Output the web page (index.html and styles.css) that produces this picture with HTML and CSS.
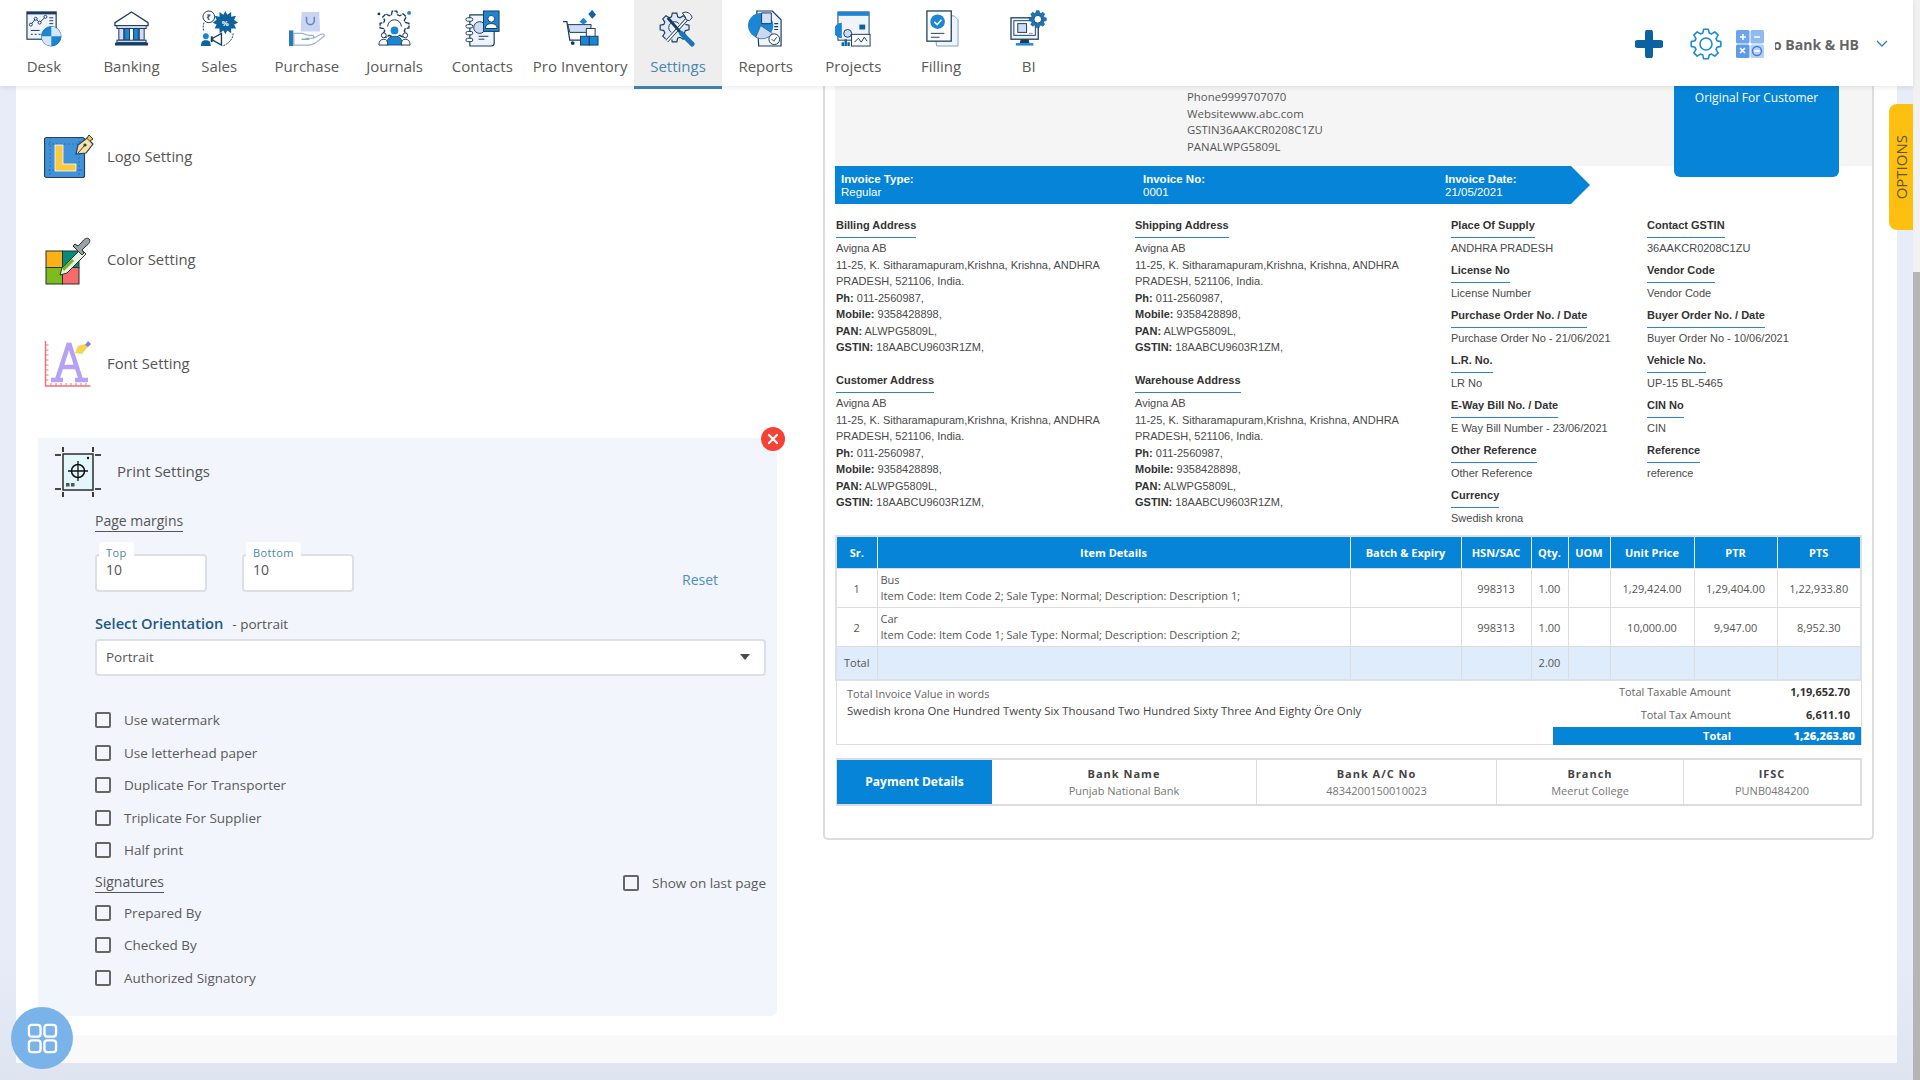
FILE: index.html
```html
<!DOCTYPE html>
<html lang="en">
<head>
<meta charset="utf-8">
<title>Invoice Settings</title>
<link rel="stylesheet" href="styles.css">
</head>
<body>
<svg class="defs" aria-hidden="true"><symbol id="gear" viewBox="0 0 32 32"><polygon points="27.05,12.83 30.82,13.65 30.82,18.35 27.05,19.17 26.06,21.58 28.14,24.82 24.82,28.14 21.58,26.06 19.17,27.05 18.35,30.82 13.65,30.82 12.83,27.05 10.42,26.06 7.18,28.14 3.86,24.82 5.94,21.58 4.95,19.17 1.18,18.35 1.18,13.65 4.95,12.83 5.94,10.42 3.86,7.18 7.18,3.86 10.42,5.94 12.83,4.95 13.65,1.18 18.35,1.18 19.17,4.95 21.58,5.94 24.82,3.86 28.14,7.18 26.06,10.42"/></symbol></svg>
<div class="page">
  <div class="window">
    <header class="topbar">
      <nav class="menu">
        <a class="menu-item">
          <svg class="menu-icon" viewBox="0 0 38 38"><rect x="2" y="2" width="30" height="28" fill="#eef3fc" stroke="#1a3c5e" stroke-width="1.2"/><rect x="2" y="2" width="30" height="2.5" fill="#1a3c5e"/><polyline points="6,15 11,9 15,13 21,7" fill="none" stroke="#1a3c5e" stroke-width="1"/><circle cx="6" cy="15" r="1.5" fill="#fff" stroke="#1a3c5e"/><circle cx="11" cy="9" r="1.5" fill="#fff" stroke="#1a3c5e"/><circle cx="15" cy="13" r="1.5" fill="#fff" stroke="#1a3c5e"/><circle cx="21" cy="7" r="1.5" fill="#fff" stroke="#1a3c5e"/><path d="M25 8h4M25 11h4M25 14h4M6 21h9M6 25h2M10 25h2M14 25h2" stroke="#1a3c5e" stroke-width="1"/><circle cx="27" cy="27" r="10" fill="#1a86d4" stroke="#1a6fa8"/><path d="M27 17a10 10 0 0 1 10 10H27zM27 27H17a10 10 0 0 0 10 10z" fill="#d5e6f8"/></svg>
          <span>Desk</span>
        </a>
        <a class="menu-item">
          <svg class="menu-icon" viewBox="0 0 38 38"><path d="M19 2 2 13v3h34v-3z" fill="#fff" stroke="#1a3c5e" stroke-width="1.3"/><rect x="4" y="16" width="30" height="3" fill="#cfdcf5" stroke="#1a3c5e"/><rect x="6" y="19" width="5" height="12" fill="#cfdcf5" stroke="#1a3c5e"/><rect x="12" y="19" width="5" height="12" fill="#1a86d4" stroke="#1a3c5e"/><rect x="21" y="19" width="5" height="12" fill="#1a86d4" stroke="#1a3c5e"/><rect x="27" y="19" width="5" height="12" fill="#cfdcf5" stroke="#1a3c5e"/><rect x="4" y="31" width="30" height="2.5" fill="#cfdcf5" stroke="#1a3c5e"/><rect x="2" y="33.5" width="34" height="3" fill="#1a3c5e"/></svg>
          <span>Banking</span>
        </a>
        <a class="menu-item">
          <svg class="menu-icon" viewBox="0 0 38 38"><circle cx="8" cy="7" r="6" fill="#fff" stroke="#1a3c5e"/><text x="8" y="10" class="glyph" fill="#1a3c5e">₹</text><polygon points="25,1 27,5 31,2 31,7 36,6 34,10 38,13 34,15 36,19 31,19 31,24 27,21 25,25 23,21 19,24 19,19 14,19 16,15 12,13 16,10 14,6 19,7 19,2 23,5" fill="#10629e"/><text x="25" y="16" class="glyph" fill="#fff">%</text><circle cx="5" cy="27" r="3" fill="#1a86d4"/><path d="M0 37c0-5 2-6 5-6s5 1 5 6z" fill="#10629e"/><path d="M12 29l9-5v12l-9-5z" fill="#fff" stroke="#1a3c5e" stroke-width="1.4"/><path d="M12 27h-2v6h2z" fill="#1a3c5e"/><path d="M33 24c0 6-5 11-11 13M3 13c-1 3-1 7 0 9" fill="none" stroke="#1a3c5e" stroke-dasharray="2 1"/></svg>
          <span>Sales</span>
        </a>
        <a class="menu-item">
          <svg class="menu-icon" viewBox="0 0 38 38"><path d="M14 2h18l1 20H13z" fill="#c9d5f3"/><path d="M19 7v4a4 4 0 0 0 8 0V7" fill="none" stroke="#6a85c0" stroke-width="1.6"/><rect x="1" y="21" width="4.500" height="16" fill="#2a78b8"/><path d="M6 24h8c3 0 4 2 8 2h3c2 0 2 3 0 3h-7l8 0 8-4c2-1 4 0 3 2l-9 7c-2 1-4 2-7 2H6z" fill="#fff" stroke="#9ab0cf" stroke-width="1.200"/><path d="M14 30h8" stroke="#4a86b8"/></svg>
          <span>Purchase</span>
        </a>
        <a class="menu-item">
          <svg class="menu-icon" viewBox="0 0 38 38"><use href="#gear" x="3" y="0" width="32" height="32" fill="#fff" stroke="#1a3c5e" stroke-width="1.400" stroke-dasharray="5 1"/><path d="M12 17a7 7 0 0 1 14 0" fill="none" stroke="#1a3c5e"/><circle cx="19" cy="21" r="4" fill="#1a86d4"/><path d="M11 36c0-7 3-9 8-9s8 2 8 9z" fill="#1a86d4" stroke="#1a3c5e" stroke-width=".8"/><circle cx="8" cy="26" r="2.500" fill="#fff" stroke="#1a3c5e"/><path d="M3 36c0-4 2-6 5-6s4 2 4 6z" fill="#fff" stroke="#1a3c5e"/><circle cx="30" cy="26" r="2.500" fill="#fff" stroke="#1a3c5e"/><path d="M26 36c0-4 1-6 4-6s5 2 5 6z" fill="#fff" stroke="#1a3c5e"/><circle cx="34" cy="3" r="2" fill="#1a86d4"/><circle cx="3" cy="4" r="1.500" fill="#1a3c5e"/></svg>
          <span>Journals</span>
        </a>
        <a class="menu-item">
          <svg class="menu-icon" viewBox="0 0 38 38"><path d="M6 5h22c2 0 3 1 3 3v26c0 2-1 3-3 3H6z" fill="#eef3fc" stroke="#1a3c5e" stroke-width="1.200"/><g fill="#fff" stroke="#1a3c5e"><rect x="2" y="8" width="7" height="3.500" rx="1.700"/><rect x="2" y="15" width="7" height="3.500" rx="1.700"/><rect x="2" y="22" width="7" height="3.500" rx="1.700"/><rect x="2" y="29" width="7" height="3.500" rx="1.700"/></g><circle cx="16" cy="18" r="6" fill="#cfdcf5" stroke="#1a3c5e"/><rect x="20" y="1" width="16" height="21" fill="#1a86d4" stroke="#1a3c5e"/><circle cx="28" cy="9" r="3.500" fill="#fff" stroke="#1a3c5e"/><path d="M22 19c0-4 3-5 6-5s6 1 6 5z" fill="#fff" stroke="#1a3c5e"/><path d="M15 27h10M15 30h6" stroke="#1a3c5e"/></svg>
          <span>Contacts</span>
        </a>
        <a class="menu-item menu-wide">
          <svg class="menu-icon" viewBox="0 0 38 38"><path d="M1 12h4l3 19h16" fill="none" stroke="#1a3c5e" stroke-width="1.300"/><path d="M6 15h24l-1 8H8z" fill="#cfdcf5" stroke="#1a3c5e"/><polygon points="18,12 22,8 26,12 22,15" fill="#1a86d4"/><polygon points="27,4 31,0 35,5 31,9" fill="#10629e"/><circle cx="11" cy="34" r="2" fill="#1a3c5e"/><circle cx="22" cy="34" r="2" fill="#1a3c5e"/><rect x="25" y="19" width="9" height="9" fill="#fff" stroke="#1a3c5e"/><rect x="19" y="27" width="9" height="9" fill="#1a86d4" stroke="#1a3c5e"/><rect x="28" y="27" width="9" height="9" fill="#1a86d4" stroke="#1a3c5e"/></svg>
          <span>Pro Inventory</span>
        </a>
        <a class="menu-item menu-active">
          <svg class="menu-icon" viewBox="0 0 38 38"><use href="#gear" x="0" y="2" width="32" height="32" fill="#dfe8f6" stroke="#1a3c5e" stroke-width="1.200"/><circle cx="16" cy="18" r="6" fill="#f0f0f0" stroke="#1a3c5e"/><path d="M8 32 29 9" stroke="#fff" stroke-width="5"/><path d="M8 32 29 9" stroke="#1a3c5e" stroke-width="3.500"/><path d="M8 32 29 9" stroke="#fff" stroke-width="1.800"/><path d="M24 3c4-2 9 0 10 5l-3 3-3-1-1-3z" fill="#f0f0f0" stroke="#1a3c5e"/><path d="M9 8 22 23" stroke="#1a3c5e" stroke-width="3"/><path d="M23 24 34 35" stroke="#1a76b8" stroke-width="5" stroke-linecap="round"/></svg>
          <span>Settings</span>
        </a>
        <a class="menu-item">
          <svg class="menu-icon" viewBox="0 0 38 38"><path d="M10 1h16l9 9v27H12z" fill="#eef3fc" stroke="#1a3c5e" stroke-width="1.200"/><circle cx="14" cy="16" r="13" fill="#1a86d4"/><path d="M14 16 26 24a13 13 0 0 1-17 4z" fill="#c9d8f5" stroke="#1a3c5e" stroke-width=".6"/><path d="M15 3h10v11H15z" fill="#d5dff4" stroke="#1a3c5e"/><path d="M28 14h4M28 17h4M28 20h4" stroke="#1a3c5e" stroke-width="1.200"/><circle cx="28" cy="30" r="5.500" fill="#fff" stroke="#1a3c5e"/><path d="M25.500 30l2 2 3-4" fill="none" stroke="#1a3c5e"/></svg>
          <span>Reports</span>
        </a>
        <a class="menu-item">
          <svg class="menu-icon" viewBox="0 0 38 38"><rect x="3" y="2" width="32" height="29" fill="#eef3fc" stroke="#1a3c5e"/><rect x="3" y="2" width="32" height="4" fill="#1a86d4"/><path d="M7 13a8 8 0 0 0 0 16z" fill="#1a86d4"/><circle cx="13" cy="24" r="4" fill="#cfdcf5" stroke="#1a3c5e"/><rect x="25" y="15" width="6" height="5" fill="#10629e"/><path d="M8 37V33M11 37V30M14 37V33" stroke="#10629e" stroke-width="2.500"/><rect x="17" y="25" width="19" height="12" fill="#fff" stroke="#1a3c5e"/><polyline points="20,33 24,29 27,33 30,28 33,32" fill="none" stroke="#1a3c5e"/></svg>
          <span>Projects</span>
        </a>
        <a class="menu-item">
          <svg class="menu-icon" viewBox="0 0 38 38"><path d="M10 6h22l4 4v27H14z" fill="#eef3fc" stroke="#8a9fbc"/><rect x="4" y="1" width="25" height="31" fill="#fff" stroke="#1a3c5e" stroke-width="1.300"/><circle cx="15" cy="12" r="7.500" fill="#1a86d4"/><path d="M11.500 12l3 3 4.500-5" fill="none" stroke="#fff" stroke-width="1.500"/><path d="M8 24h14M8 28h9" stroke="#1a3c5e"/></svg>
          <span>Filling</span>
        </a>
        <a class="menu-item">
          <svg class="menu-icon" viewBox="0 0 38 38"><rect x="1" y="8" width="28" height="22" fill="#eef3fc" stroke="#1a3c5e" stroke-width="1.300"/><rect x="4" y="11" width="22" height="15" fill="#fff" stroke="#1a3c5e"/><rect x="8" y="14" width="9" height="9" fill="#cfdcf5" stroke="#1a3c5e"/><path d="M11 30h8l1 4H10z" fill="#1a3c5e"/><rect x="6" y="34" width="18" height="2.500" fill="#1a86d4"/><path d="M20 24h4" stroke="#1a3c5e" stroke-dasharray="1 1"/><use href="#gear" x="19" y="0" width="19" height="19" fill="#1a76b8" stroke="#10507e"/><circle cx="28.500" cy="9.500" r="4" fill="#fff" stroke="#1a3c5e"/></svg>
          <span>BI</span>
        </a>
      </nav>
      <div class="actions">
        <svg class="act-plus" viewBox="0 0 28 28"><path d="M14 3v22M3 14h22" stroke="#0b62a0" stroke-width="8" stroke-linecap="round"/></svg>
        <svg class="act-gear" viewBox="0 0 32 32"><use href="#gear" fill="none" stroke="#1b8ad6" stroke-width="1.600" stroke-linejoin="round"/><circle cx="16" cy="16" r="6" fill="none" stroke="#1b8ad6" stroke-width="1.600"/></svg>
        <svg class="act-calc" viewBox="0 0 28 28"><rect x="0" y="0" width="13.500" height="13.500" rx="1.500" fill="#6aa5ee"/><rect x="14.500" y="0" width="13.500" height="13.500" rx="1.500" fill="#8fbbf0"/><rect x="0" y="14.500" width="13.500" height="13.500" rx="1.500" fill="#5f9be6"/><rect x="14.500" y="14.500" width="13.500" height="13.500" rx="1.500" fill="#b4d0f5"/><path d="M4 7h6M7 4v6M18 7h6M4 18l5 5M9 18l-5 5M18 21h6" stroke="#fff" stroke-width="1.600"/><circle cx="21" cy="21" r="4.500" fill="none" stroke="#3f7fd6" stroke-width="1.400"/></svg>
        <div class="company-clip"><span>Demo Bank &amp; HB</span></div>
        <svg class="act-chevron" viewBox="0 0 12 8"><path d="M1 1l5 5 5-5" fill="none" stroke="#2f7fbd" stroke-width="1.300"/></svg>
      </div>
    </header>

    <main class="sheet">
      <section class="left">
        <div class="setting-rows">
          <div class="setting-row">
            <svg class="setting-icon" viewBox="0 0 50 50"><rect x="0.500" y="5.500" width="40" height="40" rx="2" fill="#4192d9" stroke="#24415e" stroke-width="1.200"/><path d="M0 12h41M0 38h41M6 5v40M35 5v40" stroke="#1f5f99" stroke-dasharray="2 2" stroke-width=".7"/><path d="M11 13h8v19h13v7H11z" fill="#fbc93d" stroke="#fff" stroke-width=".8"/><path d="M32 22l2-9 9-7 6 6-7 9z" fill="#fbe2a0" stroke="#24415e" stroke-width="1.200"/><path d="M34 21l7-8" stroke="#24415e"/><circle cx="41" cy="13" r="1.600" fill="#24415e"/><path d="M43 6l2-3 4 4-3 2" fill="#f3c24c" stroke="#24415e"/></svg>
            <span>Logo Setting</span>
          </div>
          <div class="setting-row">
            <svg class="setting-icon" viewBox="0 0 50 50"><rect x="2" y="16" width="16.500" height="16.500" fill="#fbb117" stroke="#23352e"/><rect x="18.500" y="16" width="16.500" height="16.500" fill="#0a8a78" stroke="#23352e"/><rect x="2" y="32.500" width="16.500" height="16.500" fill="#7cbc1e" stroke="#23352e"/><rect x="18.500" y="32.500" width="16.500" height="16.500" fill="#f96a6a" stroke="#23352e"/><path d="M18 33l19-19 5 5-19 19-7 2z" fill="#e9f3e2" stroke="#23352e"/><path d="M18 33l10-9 2 2-10 10z" fill="#6fb52a"/><path d="M34 11l4-4c2-3 5-5 7-3s0 5-3 7l-4 4 2 3-2 2-9-9 2-2z" fill="#9aa0a6" stroke="#23352e"/></svg>
            <span>Color Setting</span>
          </div>
          <div class="setting-row">
            <svg class="setting-icon" viewBox="0 0 50 50"><path d="M1.500 2v45h45" fill="none" stroke="#f0707a" stroke-width="1.400"/><path d="M1.500 6h3M1.500 11h3M1.500 16h3M1.500 21h3M1.500 26h3M1.500 31h3M1.500 36h3M1.500 41h3M7 47v-3M12 47v-3M17 47v-3M22 47v-3M27 47v-3M32 47v-3M37 47v-3M42 47v-3" stroke="#f0707a"/><path d="M25 4 13 41M25 4 37 41M18 28h14M7 41h12M31 41h13" fill="none" stroke="#b6a2f5" stroke-width="4.500"/><path d="M31 14l3-7 7-2 3 3-2 2-4 5z" fill="#fcd34d"/><path d="M41 6l3-4 3 3-3 3z" fill="#7b83d8"/></svg>
            <span>Font Setting</span>
          </div>
        </div>

        <div class="print-panel">
          <button class="close-btn" aria-label="Close"><svg viewBox="0 0 24 24"><path d="M8 8l8 8M16 8l-8 8" stroke="#fff" stroke-width="2.200" stroke-linecap="round"/></svg></button>
          <div class="print-head">
            <svg class="print-icon" viewBox="0 0 46 50"><rect x="8" y="7" width="30" height="36" fill="#e3f6fb" stroke="#2b2b2b" stroke-width="1.500"/><path d="M0 8h6M40 8h6M0 42h6M40 42h6M8 0v5M38 0v5M8 45v5M38 45v5" stroke="#111" stroke-width="1.600"/><circle cx="23" cy="24" r="6.500" fill="none" stroke="#111" stroke-width="1.500"/><path d="M23 14v20M13 24h20" stroke="#111" stroke-width="1.300"/><rect x="11" y="36" width="3.500" height="3.500" fill="#555"/><rect x="16" y="36" width="3.500" height="3.500" fill="#555"/><circle cx="33" cy="11" r="1.200" fill="#111"/></svg>
            <span>Print Settings</span>
          </div>
          <div class="print-body">
            <div><span class="sub-title">Page margins</span></div>
            <div class="margin-row">
              <label class="field"><span class="field-label">Top</span><input class="field-input" value="10"></label>
              <label class="field"><span class="field-label">Bottom</span><input class="field-input" value="10"></label>
              <a class="reset">Reset</a>
            </div>
            <div class="orient-row"><span class="orient-title">Select Orientation</span><span class="orient-value">- portrait</span></div>
            <div class="select"><span>Portrait</span><i class="select-arrow"></i></div>
            <div class="check-list">
              <label class="check"><input type="checkbox"><span>Use watermark</span></label>
              <label class="check"><input type="checkbox"><span>Use letterhead paper</span></label>
              <label class="check"><input type="checkbox"><span>Duplicate For Transporter</span></label>
              <label class="check"><input type="checkbox"><span>Triplicate For Supplier</span></label>
              <label class="check"><input type="checkbox"><span>Half print</span></label>
            </div>
            <div class="sign-row">
              <span class="sub-title">Signatures</span>
              <label class="check"><input type="checkbox"><span>Show on last page</span></label>
            </div>
            <div class="check-list sign-list">
              <label class="check"><input type="checkbox"><span>Prepared By</span></label>
              <label class="check"><input type="checkbox"><span>Checked By</span></label>
              <label class="check"><input type="checkbox"><span>Authorized Signatory</span></label>
            </div>
          </div>
        </div>
      </section>

      <section class="right">
        <article class="invoice">
          <div class="inv-head">
            <div class="inv-company">
              <p>Phone9999707070</p>
              <p>Websitewww.abc.com</p>
              <p>GSTIN36AAKCR0208C1ZU</p>
              <p>PANALWPG5809L</p>
            </div>
            <div class="inv-copy">Original For Customer</div>
          </div>
          <div class="inv-bar">
            <div><b>Invoice Type:</b><br>Regular</div>
            <div><b>Invoice No:</b><br>0001</div>
            <div><b>Invoice Date:</b><br>21/05/2021</div>
          </div>
          <div class="addr-grid">
            <div class="addr-col">
              <div class="addr-block">
                <h4><span>Billing Address</span></h4>
                <p>Avigna AB<br>11-25, K. Sitharamapuram,Krishna, Krishna, ANDHRA<br>PRADESH, 521106, India.<br><b>Ph:</b> 011-2560987,<br><b>Mobile:</b> 9358428898,<br><b>PAN:</b> ALWPG5809L,<br><b>GSTIN:</b> 18AABCU9603R1ZM,</p>
              </div>
              <div class="addr-block">
                <h4><span>Customer Address</span></h4>
                <p>Avigna AB<br>11-25, K. Sitharamapuram,Krishna, Krishna, ANDHRA<br>PRADESH, 521106, India.<br><b>Ph:</b> 011-2560987,<br><b>Mobile:</b> 9358428898,<br><b>PAN:</b> ALWPG5809L,<br><b>GSTIN:</b> 18AABCU9603R1ZM,</p>
              </div>
            </div>
            <div class="addr-col">
              <div class="addr-block">
                <h4><span>Shipping Address</span></h4>
                <p>Avigna AB<br>11-25, K. Sitharamapuram,Krishna, Krishna, ANDHRA<br>PRADESH, 521106, India.<br><b>Ph:</b> 011-2560987,<br><b>Mobile:</b> 9358428898,<br><b>PAN:</b> ALWPG5809L,<br><b>GSTIN:</b> 18AABCU9603R1ZM,</p>
              </div>
              <div class="addr-block">
                <h4><span>Warehouse Address</span></h4>
                <p>Avigna AB<br>11-25, K. Sitharamapuram,Krishna, Krishna, ANDHRA<br>PRADESH, 521106, India.<br><b>Ph:</b> 011-2560987,<br><b>Mobile:</b> 9358428898,<br><b>PAN:</b> ALWPG5809L,<br><b>GSTIN:</b> 18AABCU9603R1ZM,</p>
              </div>
            </div>
            <div class="addr-col">
              <div class="pair"><h4><span>Place Of Supply</span></h4><p>ANDHRA PRADESH</p></div>
              <div class="pair"><h4><span>License No</span></h4><p>License Number</p></div>
              <div class="pair"><h4><span>Purchase Order No. / Date</span></h4><p>Purchase Order No - 21/06/2021</p></div>
              <div class="pair"><h4><span>L.R. No.</span></h4><p>LR No</p></div>
              <div class="pair"><h4><span>E-Way Bill No. / Date</span></h4><p>E Way Bill Number - 23/06/2021</p></div>
              <div class="pair"><h4><span>Other Reference</span></h4><p>Other Reference</p></div>
              <div class="pair"><h4><span>Currency</span></h4><p>Swedish krona</p></div>
            </div>
            <div class="addr-col">
              <div class="pair"><h4><span>Contact GSTIN</span></h4><p>36AAKCR0208C1ZU</p></div>
              <div class="pair"><h4><span>Vendor Code</span></h4><p>Vendor Code</p></div>
              <div class="pair"><h4><span>Buyer Order No. / Date</span></h4><p>Buyer Order No - 10/06/2021</p></div>
              <div class="pair"><h4><span>Vehicle No.</span></h4><p>UP-15 BL-5465</p></div>
              <div class="pair"><h4><span>CIN No</span></h4><p>CIN</p></div>
              <div class="pair"><h4><span>Reference</span></h4><p>reference</p></div>
            </div>
          </div>

          <table class="items">
            <colgroup><col class="c-sr"><col class="c-item"><col class="c-batch"><col class="c-hsn"><col class="c-qty"><col class="c-uom"><col class="c-unit"><col class="c-ptr"><col class="c-pts"></colgroup>
            <thead>
              <tr><th>Sr.</th><th>Item Details</th><th>Batch &amp; Expiry</th><th>HSN/SAC</th><th>Qty.</th><th>UOM</th><th>Unit Price</th><th>PTR</th><th>PTS</th></tr>
            </thead>
            <tbody>
              <tr class="row-a"><td>1</td><td class="item-cell">Bus<br>Item Code: Item Code 2; Sale Type: Normal; Description: Description 1;</td><td></td><td>998313</td><td>1.00</td><td></td><td>1,29,424.00</td><td>1,29,404.00</td><td>1,22,933.80</td></tr>
              <tr class="row-b"><td>2</td><td class="item-cell">Car<br>Item Code: Item Code 1; Sale Type: Normal; Description: Description 2;</td><td></td><td>998313</td><td>1.00</td><td></td><td>10,000.00</td><td>9,947.00</td><td>8,952.30</td></tr>
              <tr class="row-total"><td>Total</td><td></td><td></td><td></td><td>2.00</td><td></td><td></td><td></td><td></td></tr>
            </tbody>
          </table>

          <div class="summary">
            <div class="words">
              <p>Total Invoice Value in words</p>
              <p class="words-value">Swedish krona One Hundred Twenty Six Thousand Two Hundred Sixty Three And Eighty Öre Only</p>
            </div>
            <div class="totals">
              <div class="t-row"><span>Total Taxable Amount</span><b>1,19,652.70</b></div>
              <div class="t-row"><span>Total Tax Amount</span><b>6,611.10</b></div>
              <div class="t-row t-grand"><span>Total</span><b>1,26,263.80</b></div>
            </div>
          </div>

          <div class="payment">
            <div class="pay-title">Payment Details</div>
            <div class="pay-cell pay-name"><b>Bank Name</b><span>Punjab National Bank</span></div>
            <div class="pay-cell pay-ac"><b>Bank A/C No</b><span>4834200150010023</span></div>
            <div class="pay-cell pay-branch"><b>Branch</b><span>Meerut College</span></div>
            <div class="pay-cell pay-ifsc"><b>IFSC</b><span>PUNB0484200</span></div>
          </div>
        </article>
      </section>
    </main>
    <div class="sheet-foot"></div>
    <div class="options-tab"><span>OPTIONS</span></div>
    <button class="fab" aria-label="Apps"><svg viewBox="0 0 32 32"><g fill="none" stroke="#fff" stroke-width="2.400"><rect x="2" y="2" width="12" height="12" rx="3"/><rect x="18" y="2" width="12" height="12" rx="3"/><rect x="2" y="18" width="12" height="12" rx="3"/><rect x="18" y="18" width="12" height="12" rx="3"/></g></svg></button>
  </div>
  <div class="scrollbar"><div class="scroll-thumb"></div></div>
</div>
</body>
</html>
```
FILE: styles.css
```css
* { box-sizing: border-box; }
html, body { margin: 0; height: 100%; overflow: hidden; }
body { font-family: "Open Sans", sans-serif; color: #555; background: #e6edf8; }
p, h4 { margin: 0; }
.defs { display: none; }
.glyph { font-size: 8px; font-weight: 700; text-anchor: middle; font-family: "Noto Sans", "DejaVu Sans", sans-serif; }

.page { display: flex; width: 1920px; height: 1080px; }
.window { position: relative; width: 1913px; height: 1080px; display: flex; flex-direction: column; background: linear-gradient(#e6edf8 0, #e6edf8 950px, #dfe5f0 1080px); }
.scrollbar { width: 7px; background: #f1f1f1; padding-top: 272px; }
.scroll-thumb { height: 808px; background: #b5b5b5; }

/* top bar */
.topbar { position: relative; z-index: 3; flex: none; height: 86px; display: flex; background: #fff; box-shadow: 0 2px 5px rgba(0,0,0,.08); }
.menu { display: flex; }
.menu-item { width: 87.7px; height: 89px; display: flex; flex-direction: column; align-items: center; padding-top: 10px; font-size: 15px; line-height: 20px; color: #5a5a5a; white-space: nowrap; }
.menu-wide { width: 108px; }
.menu-active { background: #eeeeee; border-bottom: 3px solid #3f7fa8; color: #4a86b0; }
.menu-icon { width: 37px; height: 37px; margin-bottom: 9px; flex: none; }
.actions { margin-left: auto; display: flex; align-items: center; height: 86px; padding: 2px 25px 0 0; }
.act-plus { width: 28px; height: 28px; }
.act-gear { width: 32px; height: 32px; margin-left: 27px; }
.act-calc { width: 28px; height: 28px; margin-left: 14.5px; }
.company-clip { width: 84px; margin-left: 11px; overflow: hidden; display: flex; justify-content: flex-end; font-size: 14px; font-weight: 700; color: #666; white-space: nowrap; flex: none; }
.company-clip span { flex: none; }
.act-chevron { width: 12px; height: 8px; margin-left: 17px; }

/* sheet */
.sheet { flex: none; height: 949px; margin: 0 16px; background: #fff; display: flex; }
.sheet-foot { flex: none; height: 28px; margin: 0 16px; background: #f9f9f9; }
.left { flex: none; width: 806px; padding: 19px 0 0 22px; }
.setting-rows { display: grid; grid-auto-rows: 103.5px; padding-left: 6px; }
.setting-row { display: flex; align-items: center; gap: 13px; font-size: 14.8px; color: #555; }
.setting-row span { padding-bottom: 2px; }
.setting-icon { width: 50px; height: 50px; flex: none; }

.print-panel { position: relative; width: 739px; height: 578px; margin-top: 22.5px; background: #f2f5fb; border-radius: 0 0 6px 6px; padding: 9px 11px 0 0; }
.close-btn { position: absolute; top: -11px; right: -8px; width: 24px; height: 24px; padding: 0; border: 0; border-radius: 50%; background: #f44336; }
.close-btn svg { display: block; width: 24px; height: 24px; }
.print-head { display: flex; align-items: center; gap: 16px; padding-left: 17px; font-size: 15px; color: #555; }
.print-head span { padding-bottom: 2px; }
.print-icon { width: 46px; height: 50px; flex: none; }
.print-body { padding: 14px 0 0 57px; font-size: 14px; }
.sub-title { display: inline-block; line-height: 20px; font-size: 14px; border-bottom: 1px solid #555; color: #555; }
.margin-row { display: flex; align-items: flex-end; height: 60px; gap: 35px; }
.field { position: relative; display: block; width: 112px; height: 38px; }
.field-label { position: absolute; top: -12px; left: 4px; padding: 0 7px; font-size: 11px; line-height: 22px; letter-spacing: .4px; color: #4a86a8; background: #fff; border-radius: 3px 3px 0 0; }
.field-input { width: 112px; height: 38px; padding: 0 9px 7px; border: 2px solid #dcdfe6; border-radius: 4px; background: #fff; font: 14px "Open Sans", sans-serif; color: #555; }
.reset { margin-left: 293px; font-size: 14px; line-height: 20px; padding-bottom: 2px; color: #4a90c2; }
.orient-row { display: flex; align-items: baseline; margin-top: 21px; height: 20px; line-height: 20px; }
.orient-title { font-size: 14.7px; font-weight: 600; color: #1e5a8a; }
.orient-value { margin-left: 9px; font-size: 13.5px; color: #555; }
.select { display: flex; align-items: center; justify-content: space-between; width: 671px; height: 37px; margin-top: 6px; padding: 0 14px 2px 9px; border: 2px solid #dcdfe6; border-radius: 4px; background: #fff; font-size: 13.5px; color: #555; }
.select-arrow { width: 0; height: 0; border: 5px solid transparent; border-top: 6px solid #4a4a4a; border-bottom: 0; }
.check-list { margin-top: 28px; }
.sign-list { margin-top: -2px; }
.check { display: flex; align-items: center; height: 32.5px; gap: 13px; font-size: 13.5px; color: #5a5a5a; }
.check input { appearance: none; width: 16px; height: 16px; margin: 0; border: 2px solid #666; border-radius: 2px; background: transparent; flex: none; }
.sign-row { display: flex; align-items: center; justify-content: space-between; width: 671px; height: 32px; }

/* invoice */
.right { flex: none; width: 1051px; padding-left: 1px; }
.invoice { width: 1051px; height: 754px; border: solid #dddddd; border-width: 0 2px 2px; border-radius: 0 0 5px 5px; padding: 0 11px 0 10px; }
.inv-head { display: flex; height: 80px; margin-right: -11px; background: #f5f5f5; font-size: 11.4px; color: #555; }
.inv-company { width: 839px; padding: 3px 0 0 352px; line-height: 16.500px; }
.inv-copy { flex: none; width: 165px; height: 91px; padding-top: 3px; border-radius: 0 0 6px 6px; background: #0584d8; color: #fff; font-size: 12px; line-height: 18px; text-align: center; }
.inv-bar { display: grid; grid-template-columns: 302px 302px 1fr; width: 755px; height: 38px; padding: 6.500px 0 0 6px; background: #0584d8; clip-path: polygon(0 0, 736px 0, 100% 50%, 736px 100%, 0 100%); color: #fff; font: 11.500px/13px "Liberation Sans", Arial, sans-serif; }
.addr-grid { display: grid; grid-template-columns: 299px 316px 196px 1fr; padding: 14px 0 0 1px; margin-bottom: 1.5px; font: 11px/16.500px "Liberation Sans", Arial, sans-serif; color: #4a4a4a; }
.addr-grid b { color: #333; }
.addr-grid h4 { font-size: 11px; font-weight: 700; line-height: 14px; height: 20px; color: #333; }
.addr-grid h4 span { display: inline-block; height: 20px; padding-bottom: 5px; border-bottom: 1px solid #2a86c8; }
.addr-grid p { margin-top: 2px; white-space: nowrap; }
.addr-block { height: 155px; }
.pair { height: 45px; }

.items { width: 1026px; border-collapse: collapse; table-layout: fixed; font-size: 11px; color: #555; border: 2px solid #dde1e6; }
.c-sr { width: 41px; } .c-item { width: 473px; } .c-batch { width: 111px; } .c-hsn { width: 70px; } .c-qty { width: 37px; } .c-uom { width: 42px; } .c-unit { width: 84px; } .c-ptr { width: 83px; } .c-pts { width: 84px; }
.items th { height: 33px; padding: 0; background: #0584d8; color: #fff; font-size: 11px; font-weight: 700; border-right: 1px solid #e6f0fa; }
.items th:last-child { border-right: 0; }
.items td { padding: 0; text-align: center; border: 1px solid #dddddd; }
.items td.item-cell { text-align: left; padding-left: 3px; line-height: 16.500px; }
.row-a td { height: 39px; } .row-b td { height: 39px; }
.row-total td { height: 33px; background: #deecfb; color: #555; }

.summary { display: flex; width: 1026px; height: 64px; margin-left: 1px; border: 1px solid #dddddd; border-top: 0; font-size: 11px; }
.words { flex: none; width: 716px; padding: 4px 0 0 10px; line-height: 17px; color: #666; }
.words-value { color: #444; font-size: 11.4px; }
.totals { flex: 1; }
.t-row { display: grid; grid-template-columns: 178px 119px; height: 22px; align-items: center; text-align: right; color: #666; }
.t-row + .t-row { height: 24px; }
.t-row b { color: #333; }
.t-grand, .t-row + .t-grand { grid-template-columns: 178px 124px; height: 18px; background: #0584d8; color: #fff; font-weight: 700; }
.t-grand b { color: #fff; }

.payment { display: flex; width: 1026px; height: 48px; margin: 13px 0 0 1px; border: 2px solid #dddddd; border-left-width: 1px; font-size: 11px; }
.pay-title { flex: none; width: 155px; display: flex; align-items: center; justify-content: center; background: #0584d8; color: #fff; font-size: 12px; font-weight: 700; }
.pay-cell { display: flex; flex-direction: column; align-items: center; justify-content: center; line-height: 17px; padding-top: 1px; border-left: 1px solid #dddddd; color: #777; }
.pay-cell b { letter-spacing: 1px; color: #444; }
.pay-name { flex: none; width: 264px; border-left: 0; }
.pay-ac { flex: none; width: 240px; }
.pay-branch { flex: none; width: 187px; }
.pay-ifsc { flex: 1; }

/* floating */
.options-tab { position: absolute; z-index: 2; top: 104px; right: 0; width: 24px; height: 126px; display: flex; align-items: center; justify-content: center; border-radius: 8px 0 0 8px; background: #fdc010; }
.options-tab span { writing-mode: vertical-rl; transform: rotate(180deg); font-size: 15px; color: #5f5426; }
.fab { position: absolute; z-index: 4; left: 11px; top: 1007px; width: 62px; height: 62px; padding: 0; border: 0; border-radius: 50%; background: #7ab3ea; display: flex; align-items: center; justify-content: center; }
.fab svg { width: 31px; height: 31px; }
```
